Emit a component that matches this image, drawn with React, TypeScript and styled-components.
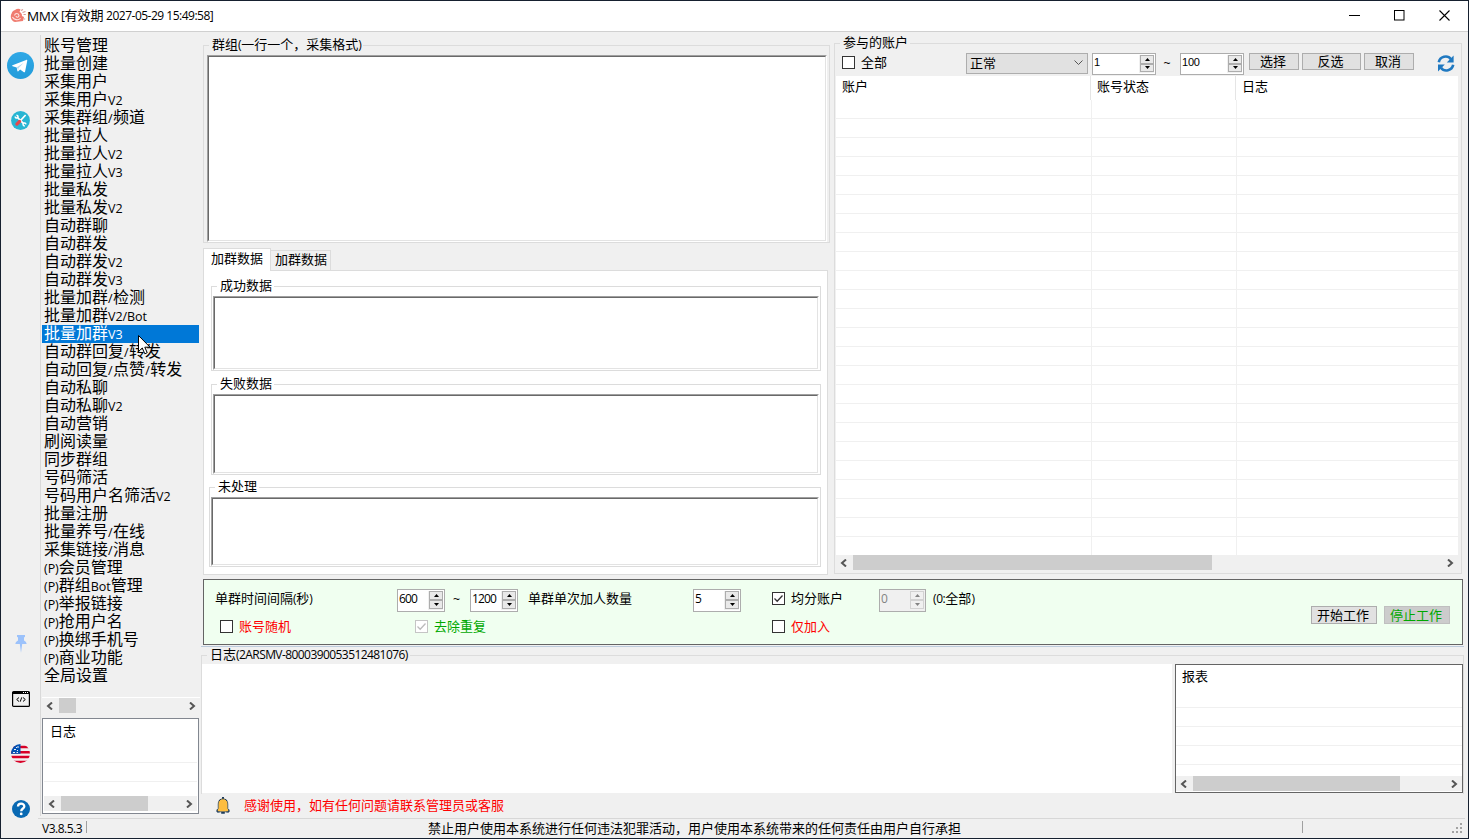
import React from "react";
import styled, { createGlobalStyle, css } from "styled-components";

const Global = createGlobalStyle`
  *, *::before, *::after { box-sizing: border-box; }
  html, body { margin: 0; padding: 0; overflow: hidden; }
  body {
    font-family: "Noto Sans CJK SC", sans-serif;
    font-size: 13px;
    font-weight: 400;
    color: #000;
    background: #f0f0f0;
  }
`;

/* ---------- text ---------- */

const Latin = styled.span<{ $size: number; $track: number }>`
  font-family: "Open Sans", "Noto Sans", sans-serif;
  font-weight: 400;
  font-size: ${(p) => p.$size}px;
  letter-spacing: ${(p) => p.$track}px;
`;

function Mixed({ children, size = 12, track = -0.57 }: { children: string; size?: number; track?: number }) {
  const parts = children.split(/([\x20-\x7e]+)/).filter(Boolean);
  return (
    <>
      {parts.map((part, i) =>
        /^[\x20-\x7e]+$/.test(part) ? (
          <Latin key={i} $size={size} $track={part === "/" ? 0.5 : track}>
            {part}
          </Latin>
        ) : (
          part
        )
      )}
    </>
  );
}

const Label = styled.span<{ $color?: string }>`
  display: block;
  height: 18px;
  line-height: 18px;
  white-space: pre;
  color: ${(p) => p.$color || "#000"};
`;

/* ---------- window frame ---------- */

const Window = styled.div`
  position: relative;
  width: 1469px;
  height: 839px;
  display: flex;
  flex-direction: column;
  border: 1px solid #16202f;
  background: #f0f0f0;
  overflow: hidden;
`;

const TitleBar = styled.header`
  flex: none;
  height: 31px;
  display: flex;
  align-items: center;
  padding: 0 18px 1px 9px;
  background: #fff;
  border-bottom: 1px solid #d0d0d0;
`;

const AppName = styled.span`
  width: 34px;
  font: 400 13.5px/20px "Open Sans", sans-serif;
  letter-spacing: -0.3px;
`;

const TitleText = styled.div`
  height: 20px;
`;

const WindowButtons = styled.div`
  margin-left: auto;
  display: flex;
  gap: 34px;
`;

const Body = styled.div`
  flex: none;
  height: 786px;
  display: flex;
`;

/* ---------- icon rail ---------- */

const Rail = styled.nav`
  width: 40px;
  height: 781px;
  margin-top: 3px;
  display: flex;
  flex-direction: column;
  align-items: center;
  border-right: 1px solid #d9d9d9;
`;

const RailSlot = styled.div<{ $h: number; $mt: number }>`
  flex: none;
  width: 39px;
  height: ${(p) => p.$h}px;
  margin-top: ${(p) => p.$mt}px;
  display: flex;
  align-items: center;
  justify-content: center;
`;

/* ---------- sidebar ---------- */

const Sidebar = styled.aside`
  width: 158px;
  margin-left: 1px;
  padding: 5px 0 4px;
  display: flex;
  flex-direction: column;
`;

const Menu = styled.ul`
  flex: none;
  height: 661px;
  margin: 0;
  padding: 0;
  list-style: none;
  border-bottom: 1px solid #fff;
`;

const MenuItem = styled.li<{ $active?: boolean }>`
  width: 157px;
  height: 18px;
  padding-left: 2px;
  font-size: 16px;
  line-height: 15px;
  white-space: pre;
  color: ${(p) => (p.$active ? "#fff" : "#000")};
  background: ${(p) => (p.$active ? "#0078d7" : "transparent")};
`;

/* ---------- scroll bar ---------- */

const ScrollTrack = styled.div`
  flex: none;
  display: flex;
  align-items: center;
  height: 15px;
  background: #f0f0f0;
`;

const ScrollEnd = styled.span<{ $left?: boolean }>`
  flex: none;
  width: 17px;
  height: 15px;
  padding: ${(p) => (p.$left ? "0 2px 0 0" : "0 0 0 2px")};
  display: flex;
  align-items: center;
  justify-content: center;
`;

const ScrollRun = styled.div`
  flex: 1;
  height: 15px;
`;

const Thumb = styled.div<{ $w: number }>`
  width: ${(p) => p.$w}px;
  height: 15px;
  background: #cdcdcd;
`;

function HScroll({ thumb }: { thumb: number }) {
  return (
    <ScrollTrack>
      <ScrollEnd $left>
        <svg width="7" height="8" viewBox="0 0 7 8">
          <path d="M6 0.5 L2 4 L6 7.5" fill="none" stroke="#555" strokeWidth="2" />
        </svg>
      </ScrollEnd>
      <ScrollRun>
        <Thumb $w={thumb} />
      </ScrollRun>
      <ScrollEnd>
        <svg width="7" height="8" viewBox="0 0 7 8">
          <path d="M1 0.5 L5 4 L1 7.5" fill="none" stroke="#555" strokeWidth="2" />
        </svg>
      </ScrollEnd>
    </ScrollTrack>
  );
}

/* ---------- list view ---------- */

const ListBox = styled.div<{ $w: number; $h: number; $pad: string; $border: string }>`
  flex: none;
  width: ${(p) => p.$w}px;
  height: ${(p) => p.$h}px;
  padding: ${(p) => p.$pad};
  display: flex;
  flex-direction: column;
  background: #fff;
  border: 1px solid ${(p) => p.$border};
`;

const ListHead = styled.div<{ $h: number }>`
  flex: none;
  height: ${(p) => p.$h}px;
  padding: 2px 0 0 6px;
`;

const ListRow = styled.div`
  flex: none;
  height: 19px;
  border-bottom: 1px solid #f0f0f0;
`;

const Grow = styled.div`
  flex: 1;
`;

/* ---------- group boxes and sunken fields ---------- */

const Group = styled.section<{ $w: number; $h: number; $mt?: number; $ml?: number }>`
  flex: none;
  width: ${(p) => p.$w}px;
  height: ${(p) => p.$h}px;
  margin: ${(p) => p.$mt || 0}px 0 0 ${(p) => p.$ml || 0}px;
  display: flex;
  flex-direction: column;
  border: 1px solid #dcdcdc;
`;

const GroupTitle = styled.div<{ $bg?: string; $gap: number }>`
  align-self: flex-start;
  height: 14px;
  margin: -9px 0 ${(p) => p.$gap}px 5px;
  padding: 0 2px 0 3px;
  line-height: 14px;
  white-space: pre;
  background: ${(p) => p.$bg || "#f0f0f0"};
`;

const Sunken = styled.div<{ $w: number; $h: number; $ml: number }>`
  flex: none;
  width: ${(p) => p.$w}px;
  height: ${(p) => p.$h}px;
  margin-left: ${(p) => p.$ml}px;
  border: 1px solid;
  border-color: #a0a0a0 #fff #fff #a0a0a0;
  background: #fff;
  &::before {
    content: "";
    display: block;
    height: 100%;
    border: 1px solid;
    border-color: #696969 #e3e3e3 #e3e3e3 #696969;
  }
`;

/* ---------- main area ---------- */

const Main = styled.main`
  width: 1264px;
  margin-left: 1px;
  display: flex;
  flex-direction: column;
`;

const Upper = styled.div`
  flex: none;
  height: 547px;
  display: flex;
`;

const LeftColumn = styled.div`
  width: 627px;
  margin-left: 2px;
  padding-top: 13px;
`;

const TabStrip = styled.div`
  display: flex;
  align-items: flex-end;
  height: 23px;
  margin: 5px 0 -1px;
`;

const Tab = styled.div<{ $active?: boolean }>`
  border: 1px solid #dcdcdc;
  white-space: nowrap;
  ${(p) =>
    p.$active
      ? css`
          position: relative;
          width: 68px;
          height: 23px;
          padding-left: 7px;
          line-height: 17px;
          background: #fff;
          border-bottom: 0;
        `
      : css`
          width: 60px;
          height: 21px;
          padding-left: 4px;
          line-height: 16px;
          border-left: 0;
        `}
`;

const TabPane = styled.div`
  width: 625px;
  height: 305px;
  padding: 15px 0 0 5px;
  background: #fff;
  border: 1px solid #dcdcdc;
`;

const AccountBar = styled.div`
  flex: none;
  height: 23px;
  margin-top: 1px;
  padding-left: 7px;
  display: flex;
  align-items: flex-start;
`;

const Box = styled.span<{ $off?: boolean }>`
  flex: none;
  width: 13px;
  height: 13px;
  display: flex;
  align-items: center;
  justify-content: center;
  background: #fff;
  border: 1px solid ${(p) => (p.$off ? "#c5c5c5" : "#333")};
`;

function Check({ on, off }: { on?: boolean; off?: boolean }) {
  return (
    <Box $off={off}>
      {on && (
        <svg width="11" height="11" viewBox="0 0 11 11">
          <path d="M1.5 5.5 L4.2 8.2 L9.5 2.5" fill="none" stroke={off ? "#bbb" : "#333"} strokeWidth="1.3" />
        </svg>
      )}
    </Box>
  );
}

const CheckLabel = styled.label<{ $w: number }>`
  flex: none;
  width: ${(p) => p.$w}px;
  display: flex;
  align-items: center;
  gap: 6px;
  height: 18px;
`;

const Select = styled.div`
  flex: none;
  width: 122px;
  height: 21px;
  padding: 0 4px 1px 3px;
  display: flex;
  align-items: center;
  justify-content: space-between;
  background: #e1e1e1;
  border: 1px solid #adadad;
`;

const SpinBox = styled.div<{ $w: number; $h: number; $off?: boolean }>`
  flex: none;
  width: ${(p) => p.$w}px;
  height: ${(p) => p.$h}px;
  padding: 1px;
  display: flex;
  justify-content: space-between;
  color: ${(p) => (p.$off ? "#838383" : "#000")};
  background: ${(p) => (p.$off ? "#f0f0f0" : "#fff")};
  border: 1px solid #adadad;
  line-height: 16px;
`;

const SpinButtons = styled.div`
  width: 15px;
  display: flex;
  flex-direction: column;
  padding: 0 0 1px 1px;
  background: #f0f0f0;
`;

const SpinButton = styled.span<{ $off?: boolean }>`
  flex: 1;
  display: flex;
  align-items: center;
  justify-content: center;
  background: ${(p) => (p.$off ? "#f0f0f0" : "#e9e9e9")};
  border: 1px solid ${(p) => (p.$off ? "#d2d2d2" : "#adadad")};
`;

const Arial = styled.span`
  font: 400 11px/15px "Liberation Sans", sans-serif;
  letter-spacing: -0.2px;
`;

function Spin({ value, w, h, off, plain }: { value: string; w: number; h: number; off?: boolean; plain?: boolean }) {
  const tone = off ? "#838383" : "#000";
  return (
    <SpinBox $w={w} $h={h} $off={off}>
      {plain ? <Arial>{value}</Arial> : <Latin $size={12} $track={-0.85}>{value}</Latin>}
      <SpinButtons>
        <SpinButton $off={off}>
          <svg width="5" height="3"><path d="M0 3 L2.5 0 L5 3 Z" fill={tone} /></svg>
        </SpinButton>
        <SpinButton $off={off}>
          <svg width="5" height="3"><path d="M0 0 L2.5 3 L5 0 Z" fill={tone} /></svg>
        </SpinButton>
      </SpinButtons>
    </SpinBox>
  );
}

const Tilde = styled.span<{ $w: number }>`
  flex: none;
  width: ${(p) => p.$w}px;
  padding-right: 2px;
  text-align: center;
  font: 400 12px/20px "Liberation Sans", sans-serif;
`;

const Button = styled.button<{ $w: number; $h: number; $ml: number; $off?: boolean }>`
  flex: none;
  width: ${(p) => p.$w}px;
  height: ${(p) => p.$h}px;
  margin: 0 0 0 ${(p) => p.$ml}px;
  padding: 0 2px ${(p) => (p.$h < 18 ? 2 : 1)}px 0;
  display: flex;
  align-items: center;
  justify-content: center;
  font: inherit;
  line-height: 14px;
  white-space: nowrap;
  color: ${(p) => (p.$off ? "#00a800" : "#000")};
  background: ${(p) => (p.$off ? "#cccccc" : "#e1e1e1")};
  border: 1px solid ${(p) => (p.$off ? "#bfbfbf" : "#adadad")};
`;

const RefreshWrap = styled.span`
  margin: 2px 0 0 23px;
  line-height: 0;
`;

const Table = styled.div`
  flex: none;
  width: 622px;
  height: 479px;
  margin-left: 1px;
  background: #fff;
  overflow: hidden;
`;

const TableHead = styled.div`
  display: grid;
  grid-template-columns: 255px 145px 1fr;
  height: 24px;
`;

const HeadCell = styled.div`
  padding-left: 6px;
  line-height: 19px;
  border-right: 1px solid #e5e5e5;
  &:last-child { border-right: 0; }
`;

const TableRow = styled.div`
  display: grid;
  grid-template-columns: 256px 145px 1fr;
  height: 19px;
  border-bottom: 1px solid #f0f0f0;
`;

const Cell = styled.div`
  border-right: 1px solid #f0f0f0;
  &:last-child { border-right: 0; }
`;

const TableScroll = styled.div`
  width: 622px;
  margin-left: 1px;
`;

/* ---------- settings panel ---------- */

const Settings = styled.section`
  flex: none;
  width: 1260px;
  height: 66px;
  margin-left: 2px;
  display: flex;
  background: #f0fff0;
  border: 1px solid #646464;
`;

const SettingsGrid = styled.div`
  width: 1107px;
  padding: 9px 0 0 11px;
`;

const SettingsRow = styled.div<{ $h: number; $pad?: number }>`
  display: flex;
  height: ${(p) => p.$h}px;
  padding-left: ${(p) => p.$pad || 0}px;
`;

const Slot = styled.div<{ $w: number }>`
  flex: none;
  width: ${(p) => p.$w}px;
`;

const Actions = styled.div`
  display: flex;
  padding-top: 26px;
`;

/* ---------- log area ---------- */

const LogGroup = styled.section`
  flex: none;
  width: 1263px;
  height: 139px;
  margin-top: 8px;
  display: flex;
  flex-direction: column;
  border: 1px solid #dcdcdc;
  border-bottom: 0;
`;

const Divider = styled.div`
  flex: none;
  width: 1263px;
  height: 1px;
  margin-top: 1px;
  background: #bccbdc;
`;

const LogSplit = styled.div`
  display: flex;
  gap: 3px;
`;

const LogText = styled.div`
  width: 970px;
  height: 129px;
  background: #fff;
`;

const Notice = styled.div`
  display: flex;
  align-items: center;
  height: 22px;
  padding-left: 15px;
  gap: 14px;
`;

/* ---------- status bar ---------- */

const StatusBar = styled.footer`
  flex: none;
  height: 20px;
  margin: 0 3px 0 37px;
  padding: 0 2px 0 4px;
  display: flex;
  align-items: flex-start;
  border-top: 1px solid #d7d7d7;
`;

const StatusText = styled.div<{ $w: number }>`
  width: ${(p) => p.$w}px;
  height: 19px;
  line-height: 18px;
  white-space: pre;
`;

const StatusMark = styled.div`
  width: 1px;
  height: 12px;
  margin-top: 2px;
  background: #a0a0a0;
`;

const Pointer = styled.svg`
  position: absolute;
  left: 137px;
  top: 334px;
`;

/* ---------- icons ---------- */

const LogoIcon = () => (
  <svg width="17" height="15" viewBox="0 0 17 15">
    <path d="M5 2 C7 0.6 9 0.6 10.5 1.4 L9.5 4 C11 4.5 12.2 6 12 8 L14 9 L13 13 L5 14 C0.6 12.6 0 8 1.6 5.4 C2 3.6 3.4 2.6 5 2 Z" fill="#f07c70" />
    <path d="M4.5 7.5 C5 4.8 8.8 4.8 9 7.6 C9 9.6 6.2 9.8 6 8 M2.4 9 C4 12 8 12.6 10.6 10.4" fill="none" stroke="#fde4e0" strokeWidth="1.1" />
    <path d="M11 2.5 L13 1.5 M12.5 4.5 L15.5 3.5 M13.5 6.5 L15.8 6.5 M13.8 11 H15.2" fill="none" stroke="#d79a95" strokeWidth="1.2" />
  </svg>
);

const TelegramIcon = () => (
  <svg width="27" height="27" viewBox="0 0 27 27">
    <defs>
      <linearGradient id="tg" x1="0" y1="0" x2="0" y2="1">
        <stop offset="0" stopColor="#2fa8e6" />
        <stop offset="1" stopColor="#239cda" />
      </linearGradient>
    </defs>
    <circle cx="13.5" cy="13.5" r="13.5" fill="url(#tg)" />
    <path d="M5.5 13.3 L19.2 7.9 C20 7.6 20.4 8.1 20.2 8.9 L18.1 19.5 C17.9 20.4 17.3 20.5 16.6 20.1 L13.1 17.4 L11.3 19.3 C10.9 19.7 10.5 19.6 10.4 19.1 L9.7 15.6 L5.6 14.3 C5 14.1 5 13.5 5.5 13.3 Z" fill="#fff" />
    <path d="M9.9 15.3 L16.8 10.8 L11.6 15.9 L11.2 18.6 Z" fill="#b5daf0" />
  </svg>
);

const ToolsIcon = () => (
  <svg width="19" height="19" viewBox="0 0 19 19">
    <circle cx="9.5" cy="9.5" r="9.4" fill="#27b5d3" />
    <path d="M6 6 L12.6 12.6" stroke="#fff" strokeWidth="1.7" />
    <path d="M4.2 5.4 C4.2 7.8 7.4 7.6 7 5.2 C6.8 4.4 6 4.2 5.4 4.2" fill="none" stroke="#fff" strokeWidth="1.5" />
    <path d="M15 13.4 C14.6 11.4 11.8 11.8 12.1 13.8 C12.4 14.9 13.2 15 13.8 15" fill="none" stroke="#fff" strokeWidth="1.5" />
    <path d="M14.6 4 L9.6 9.4" stroke="#fff" strokeWidth="1.6" />
    <path d="M8.6 10.4 L5.9 13.1" stroke="#e5484d" strokeWidth="3.2" strokeLinecap="round" />
  </svg>
);

const PinIcon = () => (
  <svg width="12" height="18" viewBox="0 0 12 18">
    <path d="M2 0 H10 V1.8 L9 2.6 V5.4 C10.6 6.2 11.6 7.4 11.6 9 H7.2 L6 17.8 L4.8 9 H0.4 C0.4 7.4 1.4 6.2 3 5.4 V2.6 L2 1.8 Z" fill="#9cc2fb" />
  </svg>
);

const CodeIcon = () => (
  <svg width="18" height="16" viewBox="0 0 18 16">
    <rect x="0.6" y="0.6" width="16.8" height="14.8" rx="1" fill="none" stroke="#000" strokeWidth="1.2" />
    <path d="M0.5 2 H17.5" stroke="#000" strokeWidth="2" />
    <path d="M11 1.5 H12 M13 1.5 H14 M15 1.5 H16" stroke="#fff" strokeWidth="1" />
    <path d="M7 6.5 L4.7 8.5 L7 10.5 M11 6.5 L13.3 8.5 L11 10.5 M9.8 6.3 L8.2 10.7" fill="none" stroke="#000" strokeWidth="1" />
  </svg>
);

const FlagIcon = () => (
  <svg width="19" height="19" viewBox="0 0 19 19">
    <defs>
      <clipPath id="round"><circle cx="9.5" cy="9.5" r="9.5" /></clipPath>
    </defs>
    <g clipPath="url(#round)">
      <rect width="19" height="19" fill="#f0f0f0" />
      <path d="M0 3 H19 M0 8.3 H19 M0 13 H19 M0 18 H19" stroke="#d80027" strokeWidth="2.4" />
      <rect width="9.5" height="9.8" fill="#0052b4" />
      <path d="M5 3.5 H6 M7 2 V4 M3 5.5 H5 M6 6.5 H7 M2 8.5 H4 M5.5 8.5 H7" stroke="#e8eef8" strokeWidth="1" />
    </g>
  </svg>
);

const HelpIcon = () => (
  <svg width="18" height="18" viewBox="0 0 18 18">
    <circle cx="9" cy="9" r="9" fill="#0869b3" />
    <path d="M6 6.4 C6 2.8 12.3 2.8 12.3 6.4 C12.3 8.6 9.2 8.4 9.2 11.3" fill="none" stroke="#fff" strokeWidth="2.3" />
    <circle cx="9.2" cy="13.9" r="1.4" fill="#fff" />
  </svg>
);

const RefreshIcon = () => (
  <svg width="18" height="17" viewBox="0 0 18 17">
    <path d="M1.8 7.2 C2.8 1.4 10.5 -0.6 14 4.2" fill="none" stroke="#2079c1" strokeWidth="2.6" />
    <path d="M16.6 0.6 V7.4 H9.8 Z" fill="#2079c1" />
    <path d="M16.2 9.8 C15.2 15.6 7.5 17.6 4 12.8" fill="none" stroke="#2079c1" strokeWidth="2.6" />
    <path d="M1 16.4 V9.6 H7.8 Z" fill="#2079c1" />
  </svg>
);

const BellIcon = () => (
  <svg width="14" height="17" viewBox="0 0 14 17">
    <path d="M7 0 V2.4 M5.2 15.8 H8.8" stroke="#1d3c5c" strokeWidth="2" />
    <path d="M7 1.8 C3.8 1.8 2.2 4 2.2 7 V11.5 L1 13.2 V14.8 H13 V13.2 L11.8 11.5 V7 C11.8 4 10.2 1.8 7 1.8 Z" fill="#fdbd40" stroke="#1d3c5c" strokeWidth="0.7" />
    <path d="M4.8 2 L3 4 M9.2 2 L11 4 M1.2 12.4 V15 H3.6 M12.8 12.4 V15 H10.4" fill="none" stroke="#1d3c5c" strokeWidth="1" />
  </svg>
);

const GripIcon = () => (
  <svg width="11" height="11" viewBox="0 0 11 11">
    <path d="M8 0h2v2H8z M4 4h2v2H4z M8 4h2v2H8z M0 8h2v2H0z M4 8h2v2H4z M8 8h2v2H8z" fill="#a3a3a3" />
  </svg>
);

const GripWrap = styled.div`
  margin: 4px 0 0 auto;
  line-height: 0;
`;

/* ---------- data ---------- */

const MENU = [
  "账号管理", "批量创建", "采集用户", "采集用户V2", "采集群组/频道", "批量拉人", "批量拉人V2", "批量拉人V3",
  "批量私发", "批量私发V2", "自动群聊", "自动群发", "自动群发V2", "自动群发V3", "批量加群/检测",
  "批量加群V2/Bot", "批量加群V3", "自动群回复/转发", "自动回复/点赞/转发", "自动私聊", "自动私聊V2",
  "自动营销", "刷阅读量", "同步群组", "号码筛活", "号码用户名筛活V2", "批量注册", "批量养号/在线",
  "采集链接/消息", "(P)会员管理", "(P)群组Bot管理", "(P)举报链接", "(P)抢用户名", "(P)换绑手机号",
  "(P)商业功能", "全局设置",
];

const ROWS = Array.from({ length: 24 }, (_, i) => i);

export default function App() {
  return (
    <Window>
      <Global />
      <TitleBar>
        <LogoIcon />
        <AppName>MMX</AppName>
        <TitleText><Label><Mixed track={-0.5}>[有效期 2027-05-29 15:49:58]</Mixed></Label></TitleText>
        <WindowButtons>
          <svg width="11" height="11"><path d="M0 5.5 H11" stroke="#000" /></svg>
          <svg width="11" height="11"><rect x="0.5" y="0.5" width="9.5" height="9.5" fill="none" stroke="#000" /></svg>
          <svg width="11" height="11"><path d="M0.5 0.5 L10.5 10.5 M10.5 0.5 L0.5 10.5" stroke="#000" strokeWidth="1.1" /></svg>
        </WindowButtons>
      </TitleBar>

      <Body>
        <Rail>
          <RailSlot $h={27} $mt={17}><TelegramIcon /></RailSlot>
          <RailSlot $h={19} $mt={32}><ToolsIcon /></RailSlot>
          <RailSlot $h={18} $mt={505}><PinIcon /></RailSlot>
          <RailSlot $h={16} $mt={38}><CodeIcon /></RailSlot>
          <RailSlot $h={19} $mt={37}><FlagIcon /></RailSlot>
          <RailSlot $h={18} $mt={37}><HelpIcon /></RailSlot>
        </Rail>

        <Sidebar>
          <Menu>
            {MENU.map((name, i) => (
              <MenuItem key={name} $active={i === 16}>
                <Mixed size={12.5} track={-0.05}>{name}</Mixed>
              </MenuItem>
            ))}
          </Menu>
          <HScroll thumb={17} />
          <Grow />
          <ListBox $w={157} $h={96} $pad="1px 1px 2px" $border="#828790">
            <ListHead $h={24}><Label>日志</Label></ListHead>
            <ListRow />
            <ListRow />
            <Grow />
            <HScroll thumb={87} />
          </ListBox>
        </Sidebar>

        <Main>
          <Upper>
            <LeftColumn>
              <Group $w={627} $h={198}>
                <GroupTitle $gap={4}><Mixed track={-0.4}>群组(一行一个，采集格式)</Mixed></GroupTitle>
                <Sunken $w={620} $h={187} $ml={3} />
              </Group>
              <TabStrip>
                <Tab $active>加群数据</Tab>
                <Tab>加群数据</Tab>
              </TabStrip>
              <TabPane>
                <Group $w={610} $h={85} $ml={2}>
                  <GroupTitle $bg="#fff" $gap={4}>成功数据</GroupTitle>
                  <Sunken $w={606} $h={74} $ml={1} />
                </Group>
                <Group $w={610} $h={91} $mt={13} $ml={2}>
                  <GroupTitle $bg="#fff" $gap={4}>失败数据</GroupTitle>
                  <Sunken $w={606} $h={80} $ml={1} />
                </Group>
                <Group $w={612} $h={80} $mt={12}>
                  <GroupTitle $bg="#fff" $gap={4}>未处理</GroupTitle>
                  <Sunken $w={608} $h={69} $ml={1} />
                </Group>
              </TabPane>
            </LeftColumn>

            <Group $w={628} $h={531} $mt={11} $ml={4}>
              <GroupTitle $gap={3}>参与的账户</GroupTitle>
              <AccountBar>
                <CheckLabel $w={124}><Check /><Label>全部</Label></CheckLabel>
                <Select>
                  <Label>正常</Label>
                  <svg width="9" height="6"><path d="M0.5 0.5 L4.5 4.5 L8.5 0.5" fill="none" stroke="#555" /></svg>
                </Select>
                <Slot $w={4} />
                <Spin plain value="1" w={64} h={22} />
                <Tilde $w={24}>~</Tilde>
                <Spin plain value="100" w={64} h={22} />
                <Button $w={50} $h={17} $ml={5}>选择</Button>
                <Button $w={59} $h={17} $ml={3}>反选</Button>
                <Button $w={50} $h={17} $ml={3}>取消</Button>
                <RefreshWrap><RefreshIcon /></RefreshWrap>
              </AccountBar>
              <Table>
                <TableHead>
                  <HeadCell>账户</HeadCell>
                  <HeadCell>账号状态</HeadCell>
                  <HeadCell>日志</HeadCell>
                </TableHead>
                {ROWS.map((i) => (
                  <TableRow key={i}><Cell /><Cell /><Cell /></TableRow>
                ))}
              </Table>
              <TableScroll><HScroll thumb={359} /></TableScroll>
            </Group>
          </Upper>

          <Settings>
            <SettingsGrid>
              <SettingsRow $h={28}>
                <Slot $w={182}><Label><Mixed track={-0.3}>单群时间间隔(秒)</Mixed></Label></Slot>
                <Spin value="600" w={48} h={23} />
                <Tilde $w={25}>~</Tilde>
                <Spin value="1200" w={48} h={23} />
                <Slot $w={10} />
                <Slot $w={165}><Label>单群单次加人数量</Label></Slot>
                <Spin value="5" w={48} h={23} />
                <Slot $w={31} />
                <CheckLabel $w={107}><Check on /><Label>均分账户</Label></CheckLabel>
                <Spin value="0" w={47} h={23} off />
                <Slot $w={7} />
                <Label><Mixed track={-0.4}>(0:全部)</Mixed></Label>
              </SettingsRow>
              <SettingsRow $h={20} $pad={5}>
                <CheckLabel $w={195}><Check /><Label $color="#ff0000">账号随机</Label></CheckLabel>
                <CheckLabel $w={357}><Check on off /><Label $color="#00a800">去除重复</Label></CheckLabel>
                <CheckLabel $w={100}><Check /><Label $color="#ff0000">仅加入</Label></CheckLabel>
              </SettingsRow>
            </SettingsGrid>
            <Actions>
              <Button $w={66} $h={18} $ml={0}>开始工作</Button>
              <Button $w={66} $h={18} $ml={7} $off>停止工作</Button>
            </Actions>
          </Settings>

          <Divider />
          <LogGroup>
            <GroupTitle $gap={3}><Mixed>日志(2ARSMV-8000390053512481076)</Mixed></GroupTitle>
            <LogSplit>
              <LogText />
              <ListBox $w={288} $h={129} $pad="0 0 1px" $border="#646464">
                <ListHead $h={24}><Label>报表</Label></ListHead>
                <ListRow />
                <ListRow />
                <ListRow />
                <ListRow />
                <Grow />
                <HScroll thumb={207} />
              </ListBox>
            </LogSplit>
          </LogGroup>
          <Notice>
            <BellIcon />
            <Label $color="#ff0000">感谢使用，如有任何问题请联系管理员或客服</Label>
          </Notice>
        </Main>
      </Body>

      <StatusBar>
        <StatusText $w={44}><Mixed track={-0.5}>V3.8.5.3</Mixed></StatusText>
        <StatusMark />
        <Slot $w={341} />
        <StatusText $w={874}>禁止用户使用本系统进行任何违法犯罪活动，用户使用本系统带来的任何责任由用户自行承担</StatusText>
        <StatusMark />
        <GripWrap><GripIcon /></GripWrap>
      </StatusBar>

      <Pointer width="13" height="20" viewBox="0 0 13 20">
        <path d="M0.5 0.5 V16.5 L4.3 13 L6.8 18.8 L9.2 17.7 L6.8 12.2 H12 Z" fill="#fff" stroke="#000" strokeWidth="1" />
      </Pointer>
    </Window>
  );
}
